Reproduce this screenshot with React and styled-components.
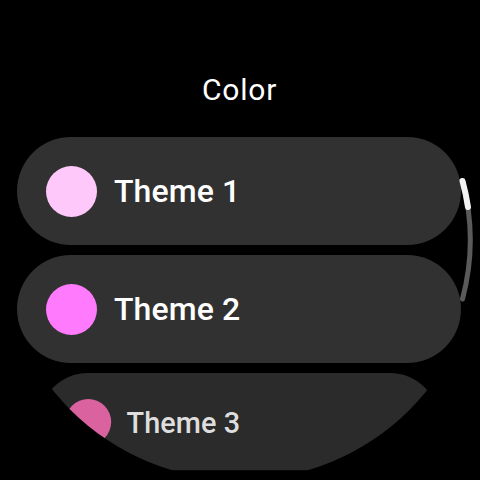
import styled, { createGlobalStyle } from 'styled-components'

const Global = createGlobalStyle`
html, body {
    margin: 0;
    padding: 0;
    background: #000;
}
`

const themes = [
    { name: 'Theme 1', color: '#ffc8fa' },
    { name: 'Theme 2', color: '#ff7afd' },
    { name: 'Theme 3', color: '#d9629f', far: true },
]

const App = () => {
    return (
        <Screen>
            <Global />
            <Face>
                <Title>Color</Title>
                <List>
                    {themes.map(t => (
                        <Chip key={t.name} $far={t.far}>
                            <Swatch $color={t.color} />
                            <Label $far={t.far}>{t.name}</Label>
                        </Chip>
                    ))}
                </List>
                <Scroll viewBox="0 0 480 480" width="480" height="480">
                    <path d="M 462.5 181 A 230 230 0 0 1 462.5 299" fill="none" stroke="#5a5a5a" strokeWidth="5" strokeLinecap="round" />
                    <path d="M 462.5 181 A 230 230 0 0 1 468 207" fill="none" stroke="#f2f2f2" strokeWidth="6" strokeLinecap="round" />
                </Scroll>
            </Face>
        </Screen>
    )
}

const Screen = styled.div`
width: 480px;
height: 480px;
background: #000;
`

const Face = styled.div`
position: relative;
width: 480px;
height: 480px;
border-radius: 50%;
overflow: hidden;
box-sizing: border-box;
padding-top: 72px;
display: flex;
flex-direction: column;
align-items: center;
font-family: Roboto, "Noto Sans", sans-serif;
&::after {
    content: '';
    position: absolute;
    inset: 0;
    border-radius: 50%;
    pointer-events: none;
    background: radial-gradient(circle at center, rgba(0,0,0,0) 84%, rgba(0,0,0,0.6) 100%);
}
`

const Title = styled.div`
color: #fff;
font-size: 30px;
font-weight: 400;
letter-spacing: 0.8px;
line-height: 36px;
margin-left: -1px;
`

const List = styled.div`
margin-top: 29px;
width: 100%;
box-sizing: border-box;
padding: 0 19px 0 17px;
display: flex;
flex-direction: column;
gap: 10px;
`

const Chip = styled.div`
height: 108px;
border-radius: 54px;
background: ${p => (p.$far ? '#2b2b2b' : '#313131')};
display: flex;
align-items: center;
box-sizing: border-box;
padding-left: 29px;
gap: 17px;
flex-shrink: 0;
transform-origin: top center;
transform: ${p => (p.$far ? 'scale(0.9)' : 'none')};
`

const Swatch = styled.div`
width: 51px;
height: 51px;
border-radius: 50%;
background: ${p => p.$color};
flex-shrink: 0;
`

const Label = styled.span`
color: ${p => (p.$far ? '#dedede' : '#fff')};
font-size: 32px;
font-weight: 500;
letter-spacing: 0.1px;
margin-top: ${p => (p.$far ? '4px' : '0')};
`

const Scroll = styled.svg`
position: absolute;
left: 0;
top: 0;
pointer-events: none;
`

export default App
